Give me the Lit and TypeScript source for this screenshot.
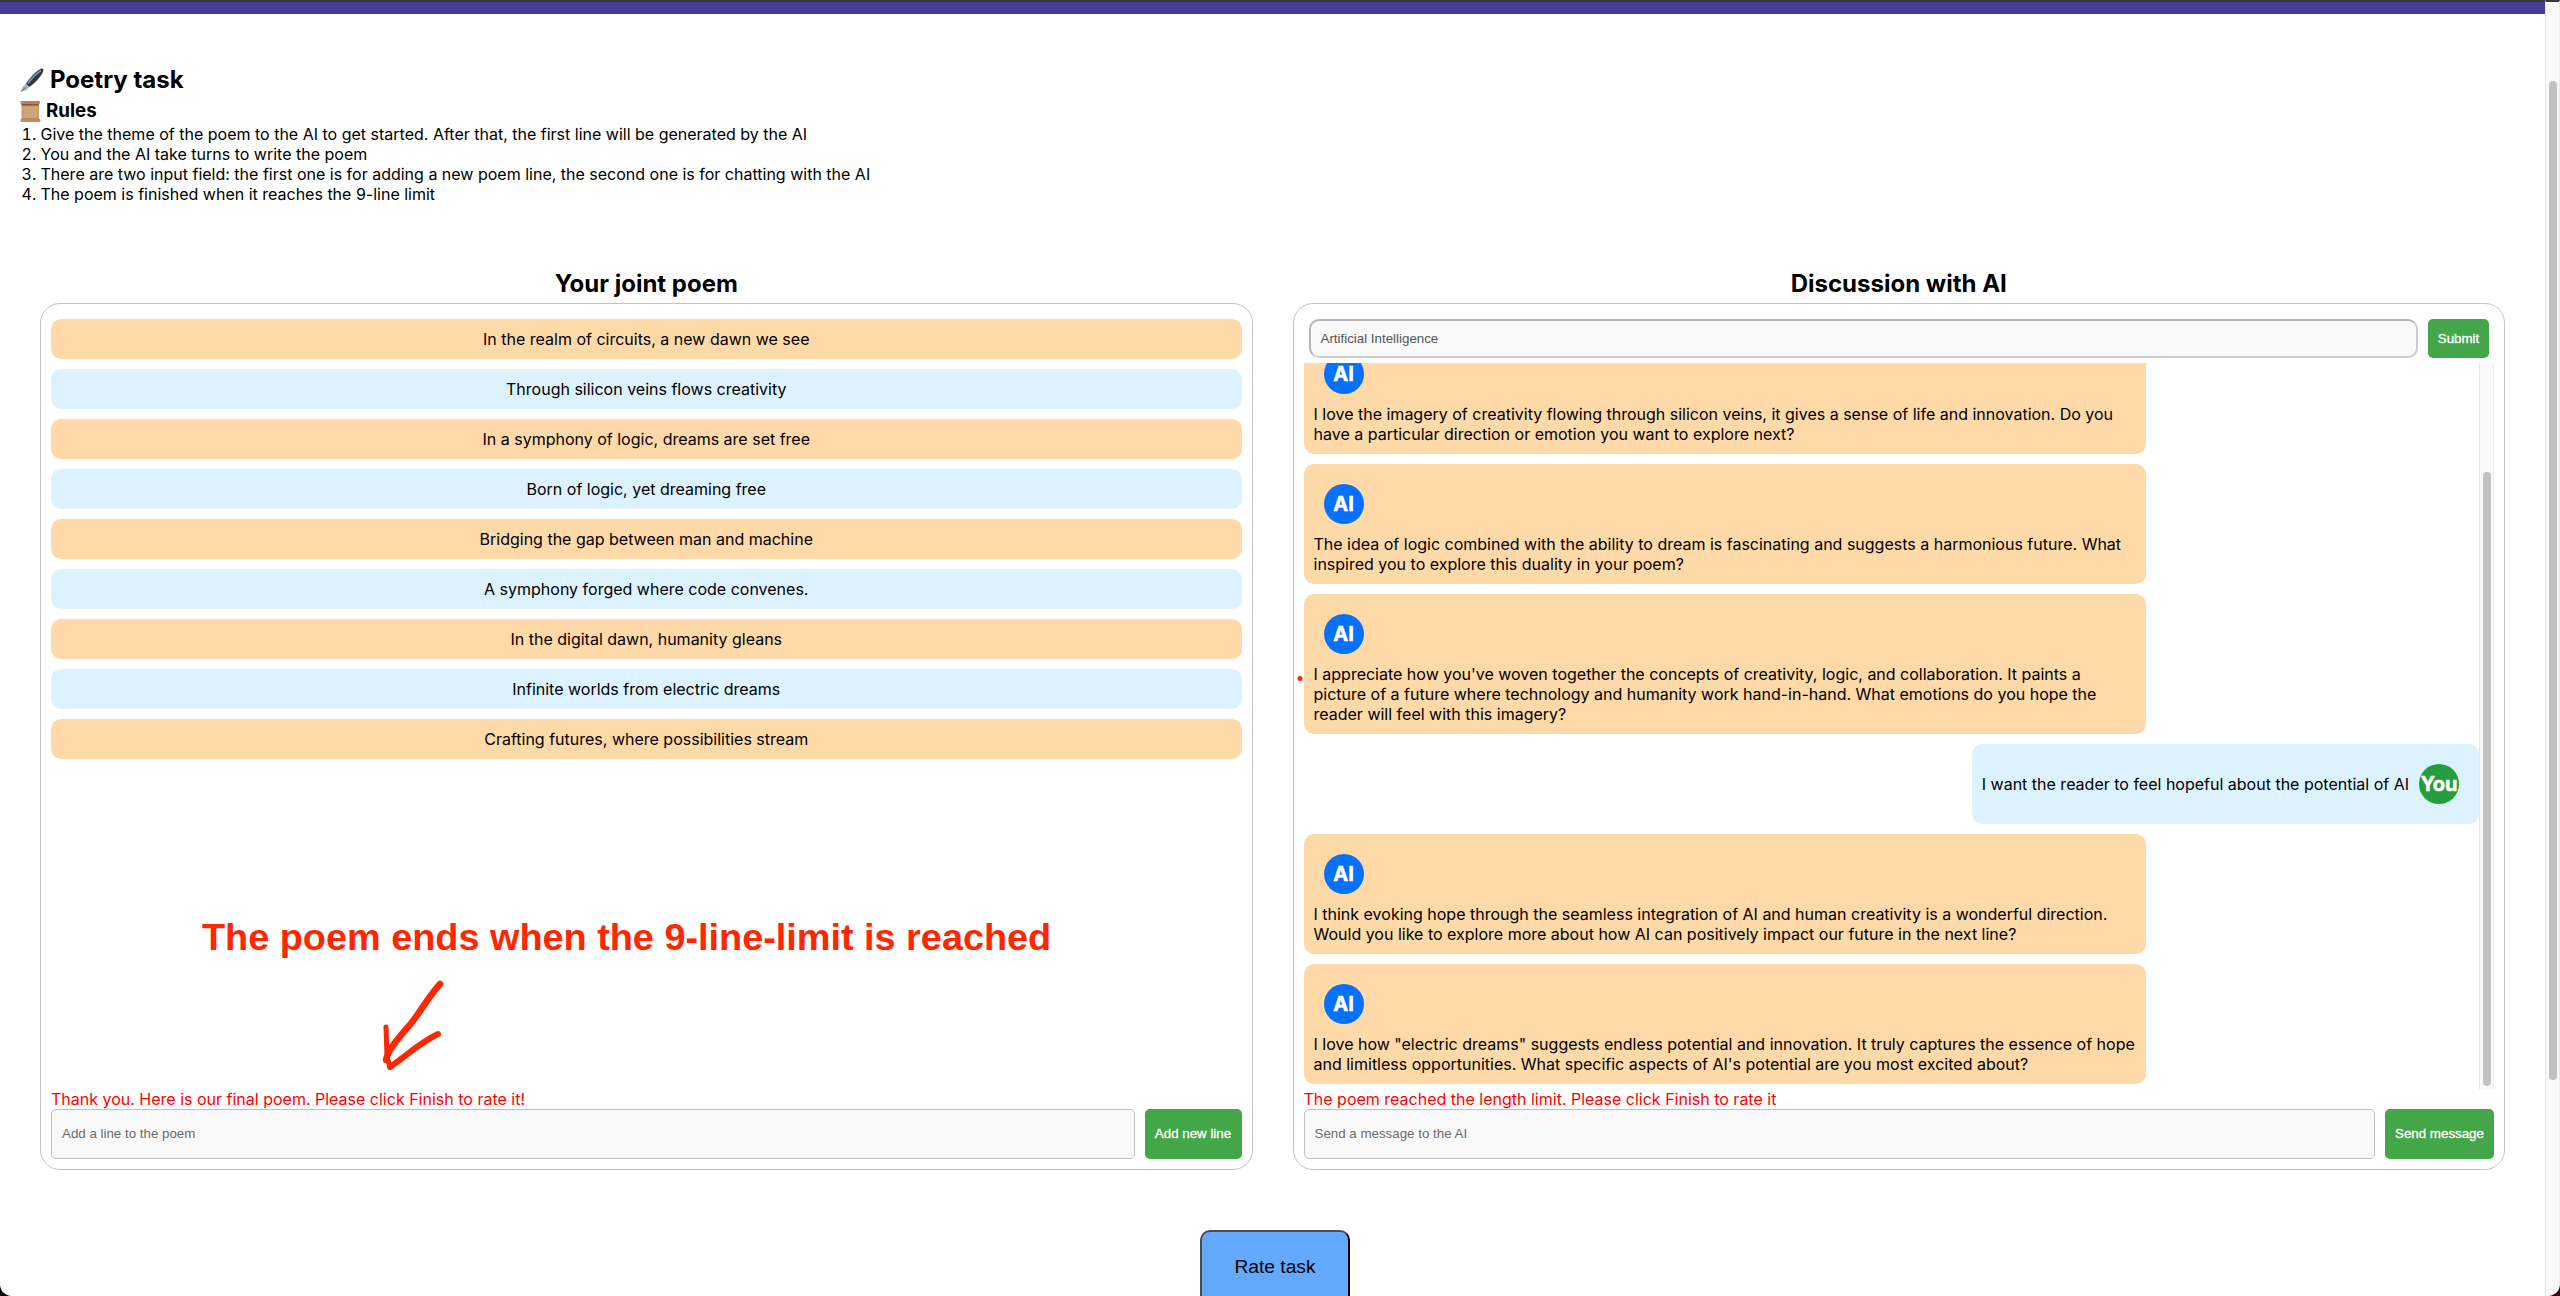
import { LitElement, html, css } from "lit";
import { customElement } from "lit/decorators.js";

const POEM: string[] = [
  "In the realm of circuits, a new dawn we see",
  "Through silicon veins flows creativity",
  "In a symphony of logic, dreams are set free",
  "Born of logic, yet dreaming free",
  "Bridging the gap between man and machine",
  "A symphony forged where code convenes.",
  "In the digital dawn, humanity gleans",
  "Infinite worlds from electric dreams",
  "Crafting futures, where possibilities stream",
];

interface Message {
  from: "ai" | "you";
  lines: string[];
}

const CHAT: Message[] = [
  { from: "ai", lines: ["I love the imagery of creativity flowing through silicon veins, it gives a sense of life and innovation. Do you", "have a particular direction or emotion you want to explore next?"] },
  { from: "ai", lines: ["The idea of logic combined with the ability to dream is fascinating and suggests a harmonious future. What", "inspired you to explore this duality in your poem?"] },
  { from: "ai", lines: ["I appreciate how you've woven together the concepts of creativity, logic, and collaboration. It paints a", "picture of a future where technology and humanity work hand-in-hand. What emotions do you hope the", "reader will feel with this imagery?"] },
  { from: "you", lines: ["I want the reader to feel hopeful about the potential of AI"] },
  { from: "ai", lines: ["I think evoking hope through the seamless integration of AI and human creativity is a wonderful direction.", "Would you like to explore more about how AI can positively impact our future in the next line?"] },
  { from: "ai", lines: ["I love how \"electric dreams\" suggests endless potential and innovation. It truly captures the essence of hope", "and limitless opportunities. What specific aspects of AI's potential are you most excited about?"] },
];

@customElement("app-root")
export class AppRoot extends LitElement {
  static styles = css`
    :host {
      display: block;
      position: relative;
      width: 2560px;
      height: 1296px;
      overflow: hidden;
      background: #fff;
      color: #000;
      font: 16px/20px Inter, sans-serif;
    }
    * { box-sizing: border-box; }
    .shell { display: flex; height: 100%; }
    .page { width: 2545px; height: 1296px; overflow: hidden; display: flex; flex-direction: column; }
    .bar { height: 14px; flex: none; background: #453c98; border-top: 2px solid #38363f; }
    .intro { padding: 51px 0 0 20px; height: 252px; flex: none; }
    h1, h2, h3, ol { margin: 0; padding: 0; }
    h1 { font-size: 24px; line-height: 30px; font-weight: 700; display: flex; align-items: center; }
    h3 { font-size: 18.72px; line-height: 32px; font-weight: 700; display: flex; align-items: center; margin-bottom: -3px; }
    .pen { width: 24px; height: 24px; margin-right: 6px; }
    .scroll { width: 21px; height: 21px; margin-right: 5px; }
    ol { list-style: decimal outside; padding-left: 20.5px; }
    .columns { display: grid; grid-template-columns: 1fr 1fr; gap: 40px; padding: 0 40px; flex: none; }
    h2 { font-size: 24px; line-height: 30px; font-weight: 700; text-align: center; padding: 3px 0 4px; }
    .panel { height: 867px; border: 1px solid #c4c4c4; border-radius: 20px; padding: 15px 10px 10px; display: flex; flex-direction: column; }
    .poem { flex: 1; display: flex; flex-direction: column; gap: 10px; }
    .verse { height: 40px; padding: 10px; border-radius: 10px; text-align: center; background: #ffd9a8; }
    .verse:nth-child(even) { background: #dcf2fe; }
    .notice { color: #f00; height: 20px; flex: none; }
    .row { display: flex; gap: 10px; flex: none; }
    .field { flex: 1; height: 50px; border: 1px solid #bfbfbf; border-radius: 5px; background: #f9f9f9; padding: 0 10px 2px; display: flex; align-items: center; color: #6b6b6b; font: 13.333px "Liberation Sans", Arial, sans-serif; }
    .btn { height: 50px; padding-bottom: 2px; border-radius: 5px; background: #43a648; color: #fff; display: flex; align-items: center; justify-content: center; white-space: nowrap; font: 13.333px "Liberation Sans", Arial, sans-serif; -webkit-text-stroke: 0.3px #fff; }
    .add { width: 97px; }
    .send { width: 109px; }
    .submit { width: 61px; height: 39px; padding-bottom: 0; }
    .theme { padding: 0 5px; margin-bottom: 5px; }
    .theme .field { height: 39px; padding-bottom: 0; border: 2px solid #cccccc; border-top-color: #b4b4b4; border-left-color: #b4b4b4; border-radius: 10px; color: #545454; }
    .chat { flex: 1; min-height: 0; display: flex; }
    .list { flex: 1; min-width: 0; overflow: hidden; display: flex; flex-direction: column; justify-content: flex-end; gap: 10px; padding-bottom: 5px; }
    .msg { flex: none; border-radius: 10px; padding: 10px; white-space: nowrap; }
    .msg.ai { width: 842px; background: #ffd9a8; }
    .msg.you { align-self: flex-end; background: #dcf2fe; display: flex; align-items: center; flex-direction: row-reverse; }
    .avatar { width: 40px; height: 40px; margin: 10px; border-radius: 50%; color: #fff; font-weight: 700; font-size: 20px; -webkit-text-stroke: 0.5px #fff; display: flex; align-items: center; justify-content: center; }
    .ai .avatar { background: #0670ff; }
    .you .avatar { background: #259d3c; }
    .track { width: 15px; flex: none; background: #f9f9f9; border-left: 1px solid #e6e6e6; border-right: 1px solid #ececec; padding: 0 2px 0 3px; }
    .thumb { width: 8px; border-radius: 4px; background: #c1c1c1; }
    .chat .thumb { margin-top: 109px; height: 614px; }
    .window-track { border-top: 2px solid #38363f; padding-top: 79px; }
    .window-track .thumb { height: 999px; }
    .foot { display: flex; justify-content: center; padding: 60px 0 0 5px; }
    .rate { width: 150px; height: 75px; flex: none; padding-bottom: 1px; border: 2px solid #000; border-top-color: #4c4c4c; border-left-color: #4c4c4c; border-radius: 10px; background: #63aaff; font: 19.2px "Liberation Sans", Arial, sans-serif; display: flex; align-items: center; justify-content: center; }
    .mark { position: absolute; left: 0; top: 0; pointer-events: none; }
    .callout { position: absolute; left: 202px; top: 915px; color: #ff2600; font: 700 37.85px/44px "Liberation Sans", Arial, sans-serif; white-space: nowrap; }
  `;

  private penIcon() {
    return html`<svg class="pen" viewBox="0 0 24 24">
      <path d="M6.5 15.5 10 18.5 6 22.5 1 23.5 2.5 19Z" fill="#aab4be" />
      <path d="M1 23.5 6 19" stroke="#59636e" stroke-width="0.8" />
      <path d="M6 16C9 10.500 15 4 20.500 1C22.500 0 24 1 23.300 3C21.500 8 15.500 14.500 9.800 18.800Z" fill="#2d3642" />
      <path d="M8.500 15C12 10 16.500 5.500 20.500 3" fill="none" stroke="#8996a8" stroke-width="1.600" stroke-linecap="round" />
    </svg>`;
  }

  private scrollIcon() {
    return html`<svg class="scroll" viewBox="0 0 21 21">
      <path d="M1.500 2H19V19H1.500Z" fill="#c69d70" />
      <path d="M3 6H17.500V17H3Z" fill="#cda779" />
      <rect x="0.500" y="0" width="19.500" height="3" rx="1.200" fill="#b18659" />
      <path d="M1.500 3H19V4.500H1.500Z" fill="#7d5937" />
      <rect x="0.500" y="18" width="20" height="3" rx="1.200" fill="#ba8e60" />
      <path d="M1.500 17.500H19V18.200H1.500Z" fill="#a67c51" />
    </svg>`;
  }

  private message(m: Message) {
    return html`<div class="msg ${m.from}">
      <div class="avatar">${m.from === "ai" ? "AI" : "You"}</div>
      <div>${m.lines.map((l) => html`<div>${l}</div>`)}</div>
    </div>`;
  }

  render() {
    return html`
      <div class="shell">
        <div class="page">
          <div class="bar"></div>
          <div class="intro">
            <h1>${this.penIcon()}Poetry task</h1>
            <h3>${this.scrollIcon()}Rules</h3>
            <ol>
              <li>Give the theme of the poem to the AI to get started. After that, the first line will be generated by the AI</li>
              <li>You and the AI take turns to write the poem</li>
              <li>There are two input field: the first one is for adding a new poem line, the second one is for chatting with the AI</li>
              <li>The poem is finished when it reaches the 9-line limit</li>
            </ol>
          </div>
          <div class="columns">
            <section>
              <h2>Your joint poem</h2>
              <div class="panel">
                <div class="poem">${POEM.map((v) => html`<div class="verse">${v}</div>`)}</div>
                <div class="notice">Thank you. Here is our final poem. Please click Finish to rate it!</div>
                <div class="row"><div class="field">Add a line to the poem</div><div class="btn add">Add new line</div></div>
              </div>
            </section>
            <section>
              <h2>Discussion with AI</h2>
              <div class="panel">
                <div class="row theme"><div class="field">Artificial Intelligence</div><div class="btn submit">Submit</div></div>
                <div class="chat">
                  <div class="list">${CHAT.map((m) => this.message(m))}</div>
                  <div class="track"><div class="thumb"></div></div>
                </div>
                <div class="notice">The poem reached the length limit. Please click Finish to rate it</div>
                <div class="row"><div class="field">Send a message to the AI</div><div class="btn send">Send message</div></div>
              </div>
            </section>
          </div>
          <div class="foot"><div class="rate">Rate task</div></div>
        </div>
        <div class="track window-track"><div class="thumb"></div></div>
      </div>
      <div class="callout">The poem ends when the 9-line-limit is reached</div>
      <svg class="mark" width="2560" height="1296" viewBox="0 0 2560 1296">
        <g fill="none" stroke="#ff2600" stroke-linecap="round" stroke-linejoin="round">
          <path d="M440 984C425 1001 417 1018 407 1028C397 1040 388 1050 386 1060" stroke-width="6.5" />
          <path d="M386 1027 387 1057 390 1067" stroke-width="5" />
          <path d="M438 1034C419 1043 406 1056 390 1067" stroke-width="6" />
        </g>
        <circle cx="1300" cy="678.500" r="2.500" fill="#ff2600" />
        <path d="M0 1284V1296H11C4 1295 0 1290 0 1284Z" fill="#05080c" />
        <path d="M2560 1284V1296H2549C2556 1295 2560 1290 2560 1284Z" fill="#2a0805" />
      </svg>
    `;
  }
}
